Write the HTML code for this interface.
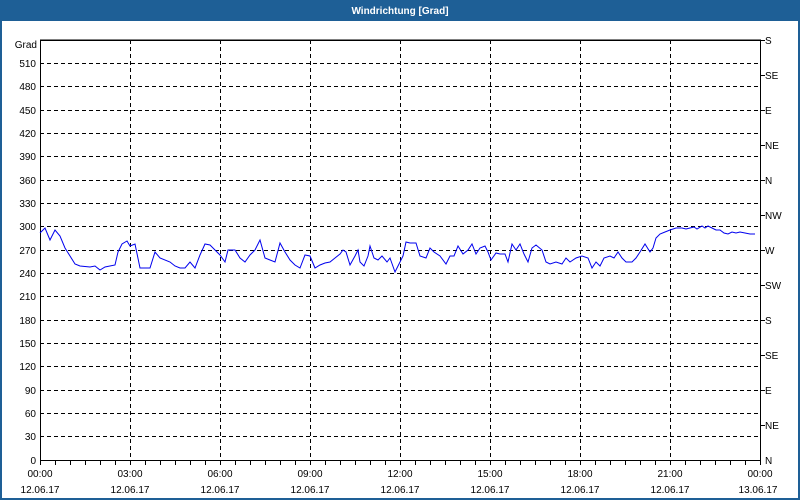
<!DOCTYPE html>
<html><head><meta charset="utf-8"><style>
html,body{margin:0;padding:0;width:800px;height:500px;overflow:hidden;background:#fff}
svg text{font-family:"Liberation Sans",sans-serif;font-size:10px;fill:#000}
</style></head><body>
<svg width="800" height="500" xmlns="http://www.w3.org/2000/svg">
<rect x="0" y="0" width="800" height="500" fill="#1e5f96"/>
<rect x="2" y="21" width="796" height="477" fill="#fff"/>
<text x="400" y="14" text-anchor="middle" fill="#fff" style="fill:#fff;font-weight:bold;font-size:10px">Windrichtung [Grad]</text>
<g stroke="#000" stroke-dasharray="4,3" stroke-width="1">
<line x1="40" y1="63.5" x2="760" y2="63.5"/><line x1="40" y1="86.5" x2="760" y2="86.5"/><line x1="40" y1="110.5" x2="760" y2="110.5"/><line x1="40" y1="133.5" x2="760" y2="133.5"/><line x1="40" y1="156.5" x2="760" y2="156.5"/><line x1="40" y1="180.5" x2="760" y2="180.5"/><line x1="40" y1="203.5" x2="760" y2="203.5"/><line x1="40" y1="226.5" x2="760" y2="226.5"/><line x1="40" y1="250.5" x2="760" y2="250.5"/><line x1="40" y1="273.5" x2="760" y2="273.5"/><line x1="40" y1="296.5" x2="760" y2="296.5"/><line x1="40" y1="320.5" x2="760" y2="320.5"/><line x1="40" y1="343.5" x2="760" y2="343.5"/><line x1="40" y1="366.5" x2="760" y2="366.5"/><line x1="40" y1="390.5" x2="760" y2="390.5"/><line x1="40" y1="413.5" x2="760" y2="413.5"/><line x1="40" y1="436.5" x2="760" y2="436.5"/>
<line x1="130.5" y1="40" x2="130.5" y2="460"/><line x1="220.5" y1="40" x2="220.5" y2="460"/><line x1="310.5" y1="40" x2="310.5" y2="460"/><line x1="400.5" y1="40" x2="400.5" y2="460"/><line x1="490.5" y1="40" x2="490.5" y2="460"/><line x1="580.5" y1="40" x2="580.5" y2="460"/><line x1="670.5" y1="40" x2="670.5" y2="460"/>
</g>
<g stroke="#000" fill="none" stroke-width="1">
<path d="M40.5 40V460.5H760.5V40ZM40 40.5H760"/>
<path d="M40.5 460v5M55.5 460v5M70.5 460v5M85.5 460v5M100.5 460v5M115.5 460v5M130.5 460v5M145.5 460v5M160.5 460v5M175.5 460v5M190.5 460v5M205.5 460v5M220.5 460v5M235.5 460v5M250.5 460v5M265.5 460v5M280.5 460v5M295.5 460v5M310.5 460v5M325.5 460v5M340.5 460v5M355.5 460v5M370.5 460v5M385.5 460v5M400.5 460v5M415.5 460v5M430.5 460v5M445.5 460v5M460.5 460v5M475.5 460v5M490.5 460v5M505.5 460v5M520.5 460v5M535.5 460v5M550.5 460v5M565.5 460v5M580.5 460v5M595.5 460v5M610.5 460v5M625.5 460v5M640.5 460v5M655.5 460v5M670.5 460v5M685.5 460v5M700.5 460v5M715.5 460v5M730.5 460v5M745.5 460v5M760.5 460v5"/>
<path d="M760 40.5h5M760 75.5h5M760 110.5h5M760 145.5h5M760 180.5h5M760 215.5h5M760 250.5h5M760 285.5h5M760 320.5h5M760 355.5h5M760 390.5h5M760 425.5h5"/>
</g>
<polyline fill="none" stroke="#0000ee" stroke-width="1" points="40,233 45,228 50,240 55,230 60,236 65,248 70,256 75,264 80,266 90,267 95,266 100,270 105,267 115,265 118,252 122,244 127,241 130,246 135,244 140,268 150,268 155,252 160,258 170,262 175,266 180,268 185,268 190,262 195,268 200,255 205,244 210,245 215,250 220,255 225,262 228,250 235,250 240,258 245,262 250,255 255,250 260,240 265,258 270,260 275,262 280,243 285,252 290,260 295,265 300,268 305,255 310,256 315,268 320,265 325,263 330,262 335,258 340,254 343,250 346,252 350,265 355,256 358,250 360,262 364,266 368,256 370,246 374,258 378,260 382,256 387,262 390,258 395,272 400,262 403,256 406,242 410,243 416,243 420,256 426,258 430,248 434,252 440,256 446,264 450,256 454,256 458,246 463,254 468,250 472,244 476,254 480,248 485,246 488,252 491,260 496,253 500,254 505,254 508,262 512,244 516,250 520,244 524,254 528,262 532,248 536,245 542,250 546,262 550,264 556,262 562,264 566,258 570,262 576,258 582,256 588,258 592,268 596,262 600,266 604,258 610,256 614,258 618,252 622,258 626,262 632,262 636,258 640,252 645,244 650,252 653,248 656,238 660,234 665,232 670,230 676,228 682,228 686,229 690,228 694,227 697,229 702,226 705,228 708,226 712,228 716,230 720,230 724,233 728,234 732,232 736,233 740,232 745,233 750,234 755,234"/>
<g text-anchor="end">
<text x="37" y="48">Grad</text>
<text x="36" y="67">510</text><text x="36" y="90">480</text><text x="36" y="114">450</text><text x="36" y="137">420</text><text x="36" y="160">390</text><text x="36" y="184">360</text><text x="36" y="207">330</text><text x="36" y="230">300</text><text x="36" y="254">270</text><text x="36" y="277">240</text><text x="36" y="300">210</text><text x="36" y="324">180</text><text x="36" y="347">150</text><text x="36" y="370">120</text><text x="36" y="394">90</text><text x="36" y="417">60</text><text x="36" y="440">30</text><text x="36" y="464">0</text>
</g>
<g>
<text x="765" y="44">S</text><text x="765" y="79">SE</text><text x="765" y="114">E</text><text x="765" y="149">NE</text><text x="765" y="184">N</text><text x="765" y="219">NW</text><text x="765" y="254">W</text><text x="765" y="289">SW</text><text x="765" y="324">S</text><text x="765" y="359">SE</text><text x="765" y="394">E</text><text x="765" y="429">NE</text><text x="765" y="464">N</text>
</g>
<g text-anchor="middle">
<text x="40" y="477">00:00</text><text x="40" y="493">12.06.17</text>
<text x="130" y="477">03:00</text><text x="130" y="493">12.06.17</text>
<text x="220" y="477">06:00</text><text x="220" y="493">12.06.17</text>
<text x="310" y="477">09:00</text><text x="310" y="493">12.06.17</text>
<text x="400" y="477">12:00</text><text x="400" y="493">12.06.17</text>
<text x="490" y="477">15:00</text><text x="490" y="493">12.06.17</text>
<text x="580" y="477">18:00</text><text x="580" y="493">12.06.17</text>
<text x="670" y="477">21:00</text><text x="670" y="493">12.06.17</text>
<text x="760" y="477">00:00</text><text x="758" y="493">13.06.17</text>
</g>
</svg>
</body></html>
